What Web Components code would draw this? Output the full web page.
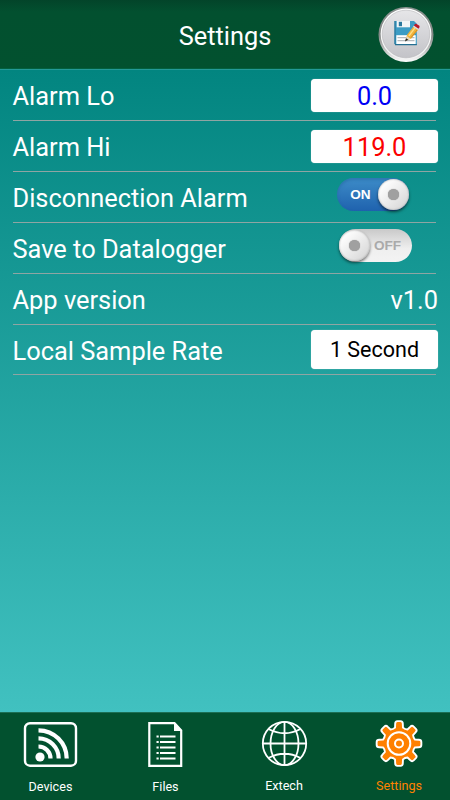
<!DOCTYPE html>
<html lang="en">
<head>
<meta charset="utf-8">
<title>Settings</title>
<style>
html,body{margin:0;height:100%}
body{font-family:Roboto,"Noto Sans",sans-serif;overflow:hidden}
</style>
</head>
<body>
<settings-app></settings-app>
<script>
const define = (name, html, init) => {
  const t = document.createElement('template');
  t.innerHTML = html;
  customElements.define(name, class extends HTMLElement {
    constructor() {
      super();
      this.attachShadow({mode: 'open'}).append(t.content.cloneNode(true));
    }
    connectedCallback() { if (init) init(this); }
  });
};

define('save-button', `
<style>:host{display:block;width:56px;height:58px}svg{display:block}</style>
<svg width="56" height="58" viewBox="0 0 56 58">
  <defs>
    <linearGradient id="rim" x1="0" y1="0" x2="0" y2="1"><stop offset="0" stop-color="#8b9290"/><stop offset=".5" stop-color="#848886"/><stop offset=".8" stop-color="#c4c6c5"/><stop offset="1" stop-color="#fff"/></linearGradient>
    <linearGradient id="ring" x1="0" y1="0" x2="0" y2="1"><stop offset="0" stop-color="#fff"/><stop offset="1" stop-color="#f2f2f3"/></linearGradient>
    <linearGradient id="face" x1="0" y1="0" x2="0" y2="1"><stop offset="0" stop-color="#e6e6e8"/><stop offset="1" stop-color="#c3c3c8"/></linearGradient>
  </defs>
  <circle cx="28" cy="28.5" r="27.500" fill="url(#rim)"/>
  <circle cx="28" cy="28" r="25.400" fill="url(#ring)"/>
  <circle cx="28" cy="28" r="23.800" fill="url(#face)" stroke="#b5b6b8" stroke-width=".6"/>
  <path d="M16.500 15H36l2.800 2.800V39H17.200L16.500 38z" fill="#3c9cc4"/>
  <path d="M16.500 38V15h1v23zM17 38h21.800v1.200H17z" fill="#256f92"/>
  <path d="M18.700 15h13.300v6.300H18.700z" fill="#f3f5f6"/>
  <path d="M20.800 15.800h3.200v4.400h-3.200z" fill="#2b789d"/>
  <path d="M18.300 29.200h19.400v8.800H18.300z" fill="#fff"/>
  <path d="M19.500 31.700h17M19.500 34.700h17" stroke="#a5acb0" stroke-width="1"/>
  <path d="M27.500 34.800l1.600-6.100 6.300-8.300 4.900 3.100-7 9z" fill="#f2b43a"/>
  <path d="M30.900 29.800l6.200-8.200" stroke="#ffdf86" stroke-width="1.400"/>
  <path d="M32.900 31.800l6.600-8.300" stroke="#d08a22" stroke-width="1"/>
  <path d="M27.500 34.800l1.300-4.800 3.600 2.700z" fill="#e9d9bd"/>
  <path d="M27 35.500l1-3.300 2.300 1.600z" fill="#222"/>
  <path d="M35 20.700l1.100-1.500 5 3.200-1.100 1.500z" fill="#d9dfe3"/>
  <path d="M35.900 19.400l1.100-1.500 1.200-.2 3.200 2.100.2 1.300-1.100 1.600z" fill="#b81928"/>
</svg>`);

define('app-header', `
<style>
:host{display:grid;grid-template-columns:70px 1fr 70px;align-items:center;height:69px;box-sizing:border-box;
 background:linear-gradient(#034429 0,#02502f 12px,#02512f 100%);border-bottom:1px solid #02603f}
h1{grid-column:2;margin:3px 0 0;text-align:center;font-weight:400;font-size:25.400px;line-height:30px;color:#fff}
save-button{margin:2px 0 0 -2px}
</style>
<h1><slot></slot></h1><save-button></save-button>`);

define('setting-row', `
<style>
:host{display:flex;box-sizing:border-box;height:51px;margin:0 14px 0 13px;border-bottom:1px solid #8fa5a3;
 align-items:center;justify-content:space-between;color:#fff;font-size:25.400px;line-height:30px;white-space:nowrap}
:host([last]){height:50px}
.l{padding-top:2px;margin-left:-.5px}
.v{display:flex;margin-right:-2px}
</style>
<div class="l"><slot></slot></div><div class="v"><slot name="value"></slot></div>`);

define('value-field', `
<style>
:host{display:flex;box-sizing:border-box;width:127px;height:33px;padding-top:2px;align-items:center;justify-content:center;background:#fff;border-radius:4px;
 box-shadow:0 0 1px #c5d5d5;font-size:25.400px;line-height:30px}
:host([kind=low]){color:#0000f5}
:host([kind=high]){color:#fb0000}
:host([kind=choice]){color:#000;height:39px;font-size:21.500px;padding-top:1px}
</style><slot></slot>`);

define('toggle-switch', `
<style>
:host{display:flex;box-sizing:border-box;align-items:center;width:72px;height:33px;border-radius:17px;margin:-5px 29px 0 0;
 font:700 13.600px/16px "Liberation Sans",sans-serif}
:host([on]){background:linear-gradient(#3d8cc8,#1f62ae);box-shadow:inset 0 2px 3px #20619c80;color:#fff}
:host(:not([on])){flex-direction:row-reverse;background:linear-gradient(#c9c9c9,#efefef 60%,#f3f3f3);color:#aaa;width:73px;margin-right:26px}
.t{flex:1;text-align:center}
:host([on]) .t{padding-left:6px}
:host(:not([on])) .t{padding-right:7px}
.k{width:31px;height:31px;border-radius:50%;background:linear-gradient(135deg,#fff 15%,#dadada 85%);box-shadow:0 2px 3px #0008,inset 0 0 2px #999;display:grid;place-items:center}
.k i{width:11px;height:11px;border-radius:50%;background:#a0a0a0;box-shadow:0 0 1px #888}
</style>
<span class="t"><slot></slot></span><span class="k"><i></i></span>`);

const icons = {
  devices: `<rect x="3" y="3.200" width="51" height="42.500" rx="5" fill="none" stroke="#fff" stroke-width="2.400"/>
    <circle cx="18" cy="37" r="4.600" fill="#fff"/>
    <path d="M16.500 26.500A12 12 0 0 1 28.500 38.500M16.500 18.300A20.200 20.200 0 0 1 36.700 38.500M16.500 10.300A28.200 28.200 0 0 1 44.700 38.500" fill="none" stroke="#fff" stroke-width="4.200"/>`,
  files: `<g transform="translate(-1)"><path d="M13.300 3.200H38.500L45.200 10.500V45.800H13.300z" fill="none" stroke="#fff" stroke-width="2.200"/>
    <path d="M38 2l8.200 9H38z" fill="#fff"/>
    <path d="M24 16.500h15.500M24 22h15.500M24 27.500h15.500M24 33h15.500M24 38.500h15.500" stroke="#fff" stroke-width="2"/>
    <path d="M20.500 16.500h2.200M20.500 22h2.200M20.500 27.500h2.200M20.500 33h2.200M20.500 38.500h2.200" stroke="#fff" stroke-width="2"/></g>`,
  globe: `<g fill="none" stroke="#fff" stroke-width="1.800"><circle cx="29.500" cy="23.500" r="21.700"/><ellipse cx="29.500" cy="23.500" rx="14" ry="21.700"/>
    <path d="M29.500 1.700v43.600M7.700 23.500h43.600M13.500 9Q29.500 17.500 45.500 9M13.500 38Q29.500 29.500 45.500 38"/></g>`,
  gear: `<g id="g"></g><circle cx="29" cy="23.500" r="11.300" fill="none" stroke="#fff" stroke-width="2"/><circle cx="29" cy="23.500" r="4" fill="#ff8000" stroke="#fff" stroke-width="2"/>`
};
const gearPath = () => {
  const cx = 29, cy = 23.5;
  const at = (r, a) => { const q = a * Math.PI / 180; return (cx + r * Math.sin(q)).toFixed(2) + ' ' + (cy - r * Math.cos(q)).toFixed(2); };
  let d = '';
  for (let i = 0; i < 8; i++) {
    const a = i * 45;
    d += (i ? 'L' : 'M') + at(16.4, a - 14) + 'L' + at(20, a - 11) + 'Q' + at(22.6, a - 10) + ' ' + at(22.4, a - 4)
      + 'L' + at(22.4, a + 4) + 'Q' + at(22.6, a + 10) + ' ' + at(20, a + 11) + 'L' + at(16.4, a + 14) + 'Q' + at(15.4, a + 22.5) + ' ' + at(16.4, a + 31);
  }
  return `<path d="${d}Z" fill="#ff8000" stroke="#fff" stroke-width="1.900" stroke-linejoin="round"/>`;
};

define('nav-item', `
<style>
:host{display:flex;flex-direction:column;align-items:center;color:#fff;font-size:12.600px;line-height:16px}
:host([active]){color:#ff8200;padding-left:10px}
svg{display:block;width:58px;height:50px;margin-top:7px}
span{margin-top:9px}
:host([up]) span{margin-top:8px}
</style><svg viewBox="0 0 58 50"></svg><span><slot></slot></span>`, el => {
  const svg = el.shadowRoot.querySelector('svg');
  svg.innerHTML = icons[el.getAttribute('icon')];
  const g = svg.querySelector('#g');
  if (g) g.innerHTML = gearPath();
});

define('tab-bar', `
<style>:host{display:grid;grid-template-columns:101px 129px 108px 112px;height:88px;box-sizing:border-box;border-top:1px solid #1c6f54;background:#02512f}
::slotted(*){min-width:0}
</style><slot></slot>`);

define('settings-app', `
<style>
:host{display:flex;flex-direction:column;width:450px;height:800px}
main{flex:1;box-sizing:border-box;border-top:1px solid #239996;background:linear-gradient(#028580,#41c1c0)}
</style>
<app-header>Settings</app-header>
<main>
  <setting-row>Alarm Lo<value-field slot="value" kind="low">0.0</value-field></setting-row>
  <setting-row>Alarm Hi<value-field slot="value" kind="high">119.0</value-field></setting-row>
  <setting-row>Disconnection Alarm<toggle-switch slot="value" on>ON</toggle-switch></setting-row>
  <setting-row>Save to Datalogger<toggle-switch slot="value">OFF</toggle-switch></setting-row>
  <setting-row>App version<span slot="value" style="padding-top:2px">v1.0</span></setting-row>
  <setting-row last>Local Sample Rate<value-field slot="value" kind="choice">1 Second</value-field></setting-row>
</main>
<tab-bar>
  <nav-item icon="devices">Devices</nav-item>
  <nav-item icon="files">Files</nav-item>
  <nav-item icon="globe" up>Extech</nav-item>
  <nav-item icon="gear" up active>Settings</nav-item>
</tab-bar>`);
</script>
</body>
</html>
